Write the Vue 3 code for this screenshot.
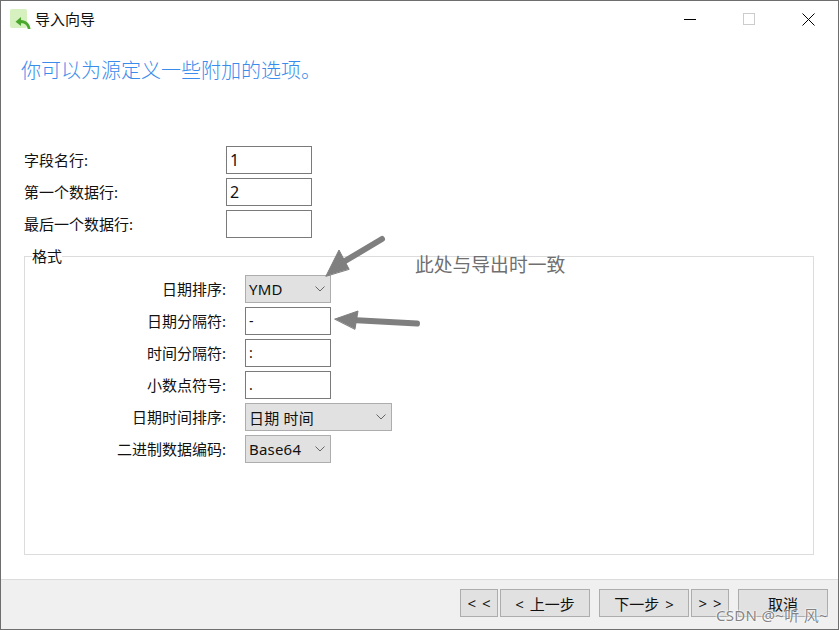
<script setup>
const topRows = [
  { label: '字段名行:', value: '1' },
  { label: '第一个数据行:', value: '2' },
  { label: '最后一个数据行:', value: '' },
]
const formatRows = [
  { label: '日期排序:', value: 'YMD', select: true },
  { label: '日期分隔符:', value: '-' },
  { label: '时间分隔符:', value: ':' },
  { label: '小数点符号:', value: '.' },
  { label: '日期时间排序:', value: '日期 时间', select: true, wide: true },
  { label: '二进制数据编码:', value: 'Base64', select: true },
]
</script>

<template>
  <div class="window">
    <header class="titlebar">
      <svg class="app-icon" width="21" height="20" viewBox="0 0 21 20">
        <rect x="0" y="0" width="17" height="19" rx="2" fill="#d6f0bf" />
        <path d="M20.500 20C20 14.500 16 11 11 11V8L5.500 12.700L11 17V14.300C14 14 16.800 15.500 17.800 20Z" fill="#4ba82e" />
      </svg>
      <span class="title">导入向导</span>
      <div class="controls">
        <svg width="12" height="12" viewBox="0 0 12 12"><path d="M0 6.500H12" stroke="#000" fill="none" /></svg>
        <svg width="12" height="12" viewBox="0 0 12 12"><rect x=".5" y=".5" width="11" height="11" stroke="#cccccc" fill="none" /></svg>
        <svg width="13" height="13" viewBox="0 0 13 13"><path d="M.5 .5L12.500 12.500M12.500 .5L.5 12.500" stroke="#000" fill="none" /></svg>
      </div>
    </header>

    <main class="body">
      <h1 class="heading">你可以为源定义一些附加的选项。</h1>

      <div class="top-form">
        <template v-for="row in topRows" :key="row.label">
          <label class="row-label">{{ row.label }}</label>
          <div class="field">{{ row.value }}</div>
        </template>
      </div>

      <section class="group">
        <div class="legend">格式</div>
        <div class="format-form">
          <template v-for="row in formatRows" :key="row.label">
            <label class="row-label right">{{ row.label }}</label>
            <div v-if="row.select" class="select" :class="{ wide: row.wide }">
              <span>{{ row.value }}</span>
              <svg width="10" height="6" viewBox="0 0 10 6"><path d="M.5 .5L5 5L9.500 .5" stroke="#666" fill="none" /></svg>
            </div>
            <div v-else class="field small">{{ row.value }}</div>
          </template>
        </div>
      </section>
    </main>

    <footer class="footer">
      <button class="btn narrow">&lt; &lt;</button>
      <button class="btn">&lt; 上一步</button>
      <button class="btn next">下一步 &gt;</button>
      <button class="btn narrow">&gt; &gt;</button>
      <button class="btn cancel">取消</button>
    </footer>

    <svg class="arrows" width="839" height="630" viewBox="0 0 839 630">
      <g fill="#7f7f7f" stroke="#7f7f7f" stroke-linejoin="round" stroke-linecap="round">
        <path d="M382 239L340 264" stroke-width="6" fill="none" />
        <path d="M326 276L339 250L349 269Z" stroke-width="1" />
        <path d="M417 323.500L352 320" stroke-width="6" fill="none" />
        <path d="M335 319L358 311L355 329Z" stroke-width="1" />
      </g>
    </svg>
    <div class="note">此处与导出时一致</div>
    <div class="watermark">CSDN @~听 风~</div>
  </div>
</template>

<style>
html, body { margin: 0; padding: 0; background: #fff; }
</style>

<style scoped>
.window {
  position: relative;
  box-sizing: border-box;
  width: 839px;
  height: 630px;
  border: 1px solid #6e6e6e;
  background: #fff;
  display: flex;
  flex-direction: column;
  overflow: hidden;
  font-family: "Noto Sans", "Noto Sans CJK SC", sans-serif;
  font-size: 15px;
  color: #111;
}
.titlebar {
  box-sizing: border-box;
  height: 38px;
  display: flex;
  align-items: center;
  padding: 0 0 2px 9px;
  flex: none;
}
.app-icon { flex: none; margin-right: 4px; }
.title { line-height: 20px; }
.controls {
  margin-left: auto;
  display: flex;
  align-items: center;
  gap: 47px;
  padding-right: 23px;
}
.body {
  flex: 1;
  display: flex;
  flex-direction: column;
  padding-left: 23px;
  padding-right: 24px;
}
.heading {
  margin: 20px 0 0 -3px;
  font-family: "Liberation Serif", "Noto Sans CJK SC", serif;
  font-weight: 300;
  font-size: 20px;
  line-height: 24px;
  color: #3a8cec;
}
.top-form {
  margin-top: 63px;
  display: grid;
  grid-template-columns: 202px 86px;
  grid-auto-rows: 28px;
  row-gap: 4px;
  align-items: center;
}
.row-label { line-height: 20px; white-space: nowrap; }
.row-label.right { text-align: right; padding-right: 19px; }
.field {
  box-sizing: border-box;
  height: 28px;
  border: 1px solid #7a7a7a;
  padding-left: 3px;
  line-height: 26px;
  font-size: 16px;
  background: #fff;
}
.field.small { font-size: 14px; }
.group {
  box-sizing: border-box;
  margin-top: 18px;
  height: 299px;
  border: 1px solid #dcdcdc;
}
.legend {
  display: table;
  margin: -11px 0 0 7px;
  height: 20px;
  line-height: 20px;
  background: #fff;
}
.format-form {
  margin-top: 9px;
  display: grid;
  grid-template-columns: 220px max-content;
  grid-auto-rows: 28px;
  row-gap: 4px;
  align-items: center;
}
.format-form .field, .format-form .select { width: 86px; }
.select {
  box-sizing: border-box;
  height: 28px;
  border: 1px solid #adadad;
  background: #e1e1e1;
  display: flex;
  align-items: center;
  justify-content: space-between;
  padding: 0 5px 0 3px;
  font-size: 15px;
  letter-spacing: .2px;
}
.format-form .select.wide { width: 147px; }
.footer {
  flex: none;
  box-sizing: border-box;
  height: 50px;
  background: #f0f0f0;
  border-top: 1px solid #dcdcdc;
  padding: 9px 10px 0 459px;
  display: flex;
  align-items: flex-start;
}
.btn {
  box-sizing: border-box;
  width: 90px;
  height: 28px;
  border: 1px solid #adadad;
  background: #e1e1e1;
  font: inherit;
  word-spacing: 2px;
  color: #111;
  padding: 0;
  margin-right: 2px;
}
.btn.narrow { width: 38px; }
.btn.next { margin-left: 7px; }
.btn.cancel { margin: 0 0 0 7px; }
.arrows { position: absolute; left: -1px; top: -1px; pointer-events: none; }
.note {
  position: absolute;
  left: 414px;
  top: 252px;
  font-size: 18.8px;
  line-height: 24px;
  color: #6f6f6f;
  white-space: nowrap;
}
.watermark {
  position: absolute;
  left: 715px;
  top: 604px;
  font-size: 15px;
  letter-spacing: .3px;
  line-height: 20px;
  color: rgba(110,110,110,.85);
  text-shadow: 0 0 2px #fff, 0 0 2px #fff;
  white-space: nowrap;
}
</style>
